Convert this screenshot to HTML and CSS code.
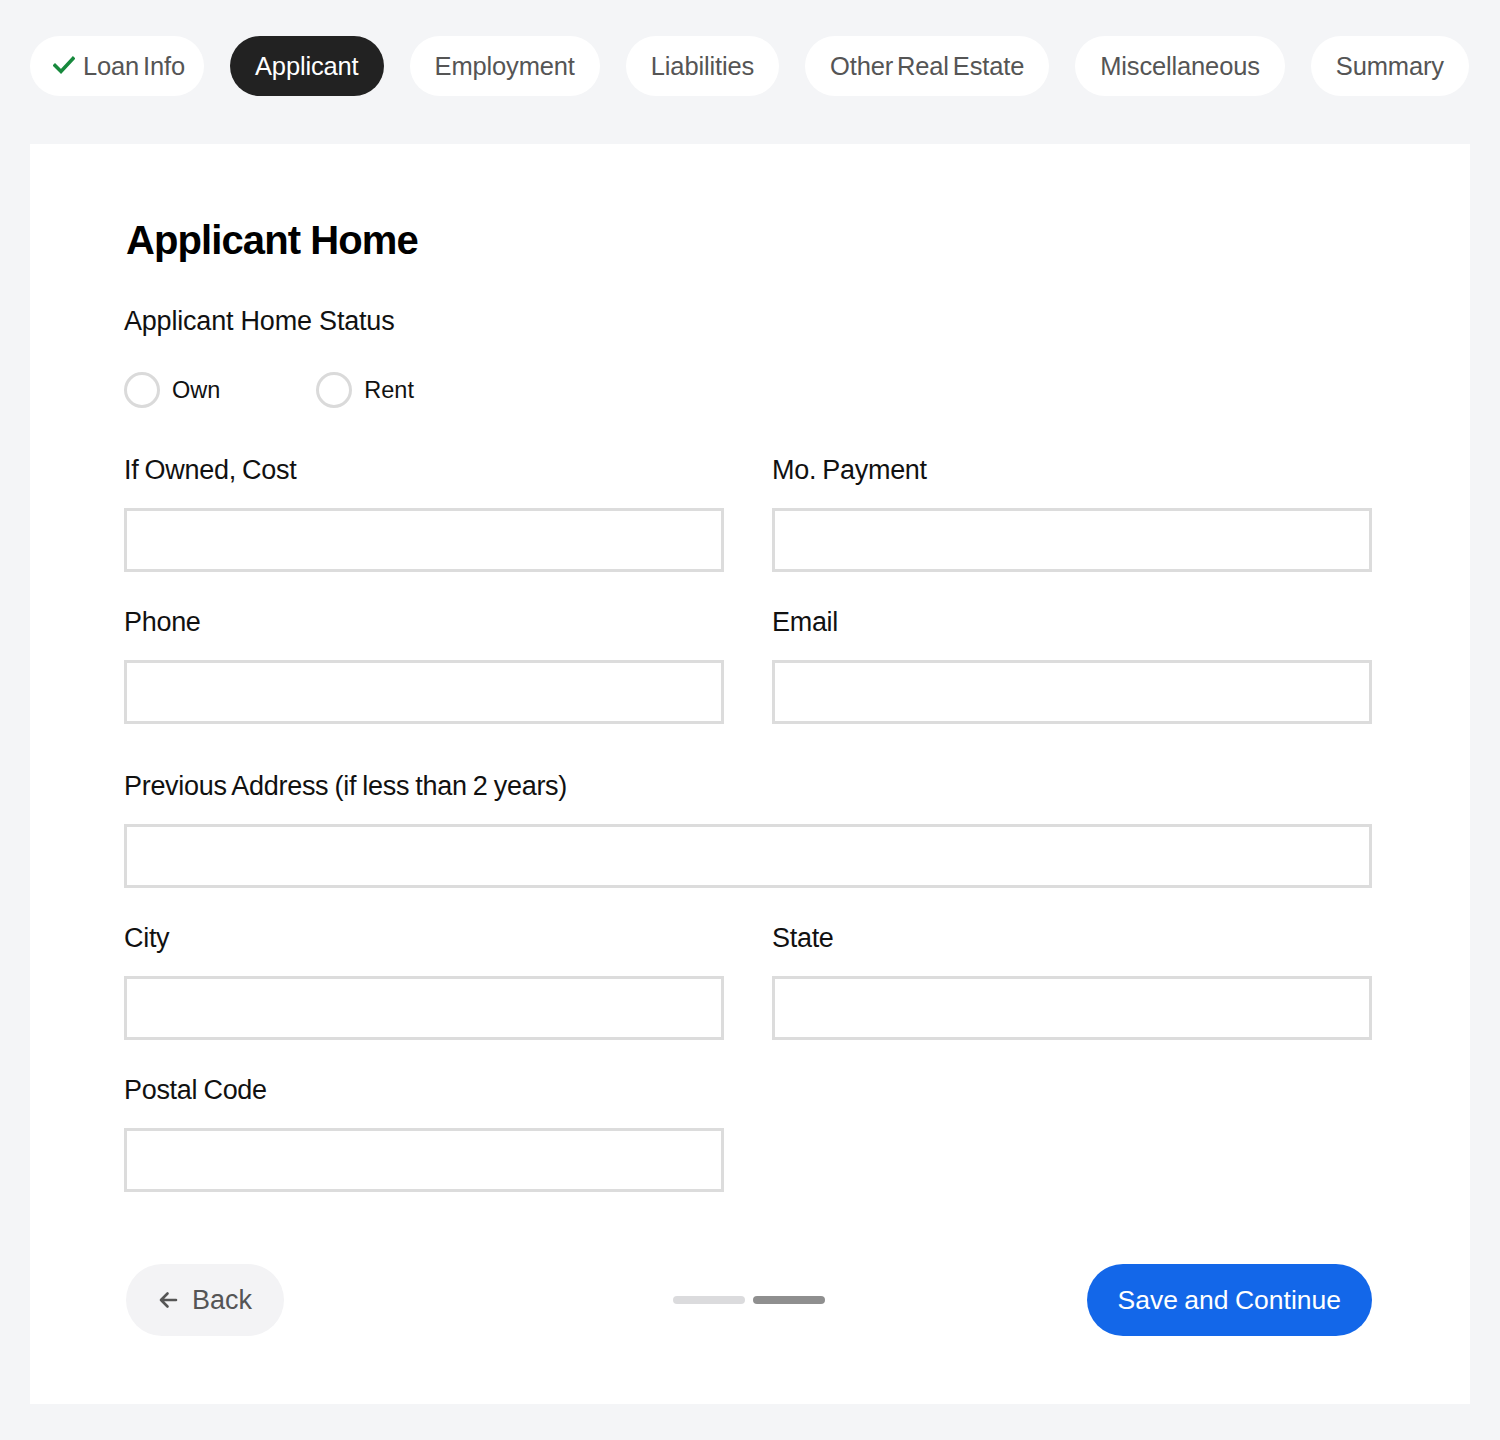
FILE: index.html
```html
<!DOCTYPE html>
<html lang="en">
<head>
<meta charset="utf-8">
<title>Applicant Home</title>
<link rel="stylesheet" href="styles.css">
</head>
<body>
<div class="page">
  <nav class="tabs">
    <a class="tab done"><svg class="check" width="22" height="20" viewBox="0 0 22 20"><path d="M2 10.5 L8 16.5 L20 3.5" fill="none" stroke="#17893d" stroke-width="3.6" stroke-linecap="square"/></svg>Loan Info</a>
    <a class="tab active">Applicant</a>
    <a class="tab">Employment</a>
    <a class="tab">Liabilities</a>
    <a class="tab">Other Real Estate</a>
    <a class="tab">Miscellaneous</a>
    <a class="tab">Summary</a>
  </nav>

  <main class="card">
    <h1 class="title">Applicant Home</h1>

    <div class="status">
      <div class="status-label">Applicant Home Status</div>
      <div class="radios">
        <label class="radio"><span class="circle"></span>Own</label>
        <label class="radio"><span class="circle"></span>Rent</label>
      </div>
    </div>

    <div class="grid">
      <div class="field"><div class="label">If Owned, Cost</div><div class="input"></div></div>
      <div class="field"><div class="label">Mo. Payment</div><div class="input"></div></div>
      <div class="field"><div class="label">Phone</div><div class="input"></div></div>
      <div class="field"><div class="label">Email</div><div class="input"></div></div>
    </div>

    <div class="field full"><div class="label">Previous Address (if less than 2 years)</div><div class="input"></div></div>

    <div class="grid after">
      <div class="field"><div class="label">City</div><div class="input"></div></div>
      <div class="field"><div class="label">State</div><div class="input"></div></div>
      <div class="field"><div class="label">Postal Code</div><div class="input"></div></div>
    </div>

    <div class="footer">
      <div class="left">
        <button class="back"><svg width="20" height="18" viewBox="0 0 20 18"><path d="M18 9 H3 M9.5 2.5 L3 9 L9.5 15.5" fill="none" stroke="#555" stroke-width="2.6" stroke-linecap="round" stroke-linejoin="round"/></svg>Back</button>
      </div>
      <div class="progress"><span class="bar"></span><span class="bar on"></span></div>
      <div class="right">
        <button class="save">Save and Continue</button>
      </div>
    </div>
  </main>
</div>
</body>
</html>
```

FILE: styles.css
```css
* { box-sizing: border-box; }
html, body { margin: 0; padding: 0; }
body {
  background: #f4f5f7;
  font-family: "Liberation Sans", Arial, sans-serif;
  color: #111;
}
.page {
  padding: 36px 30px 36px 30px;
}
.tabs {
  display: flex;
  gap: 26px;
  height: 60px;
}
.tab {
  display: flex;
  align-items: center;
  height: 60px;
  padding: 0 25px;
  border-radius: 30px;
  background: #fff;
  color: #555;
  font-size: 25.5px;
  word-spacing: -3px;
  letter-spacing: -0.15px;
  white-space: nowrap;
}
.tab.done { padding: 0 19px 0 23px; gap: 8px; }
.tab.done .check { margin-top: -2px; }
.tab.active { background: #222; color: #fff; }

.card {
  margin-top: 48px;
  background: #fff;
  padding: 72px 98px 68px 94px;
}
.title {
  margin: 0;
  font-size: 40px;
  line-height: 48px;
  font-weight: 700;
  letter-spacing: -0.9px;
  color: #000;
  padding-left: 2px;
}
.status { margin-top: 41px; }
.status-label {
  font-size: 27px;
  line-height: 32px;
  letter-spacing: -0.2px;
}
.radios {
  display: flex;
  gap: 96px;
  margin-top: 35px;
  height: 36px;
}
.radio {
  display: flex;
  align-items: center;
  gap: 12px;
  font-size: 23.5px;
}
.circle {
  width: 36px;
  height: 36px;
  border-radius: 50%;
  border: 3px solid #dadada;
}
.grid {
  display: grid;
  grid-template-columns: 600px 600px;
  column-gap: 48px;
  row-gap: 34px;
  margin-top: 46px;
}
.grid.after { margin-top: 34px; }
.field.full { margin-top: 46px; }
.label {
  font-size: 27px;
  line-height: 32px;
  letter-spacing: -0.3px;
  word-spacing: -1px;
  height: 32px;
}
.input {
  margin-top: 22px;
  height: 64px;
  border: 3px solid #dcdcdc;
  background: #fff;
}
.footer {
  margin-top: 72px;
  display: grid;
  grid-template-columns: 1fr auto 1fr;
  align-items: center;
}
.left { display: flex; padding-left: 2px; }
.right { display: flex; justify-content: flex-end; }
button {
  font-family: inherit;
  border: 0;
  cursor: pointer;
}
.back {
  display: flex;
  align-items: center;
  gap: 14px;
  height: 72px;
  padding: 0 32px 0 32px;
  border-radius: 36px;
  background: #f3f3f5;
  color: #555;
  font-size: 27px;
}
.progress {
  display: flex;
  gap: 8px;
  padding-left: 2px;
}
.bar {
  width: 72px;
  height: 8px;
  border-radius: 4px;
  background: #dbdbdd;
}
.bar.on { background: #8f8f8f; }
.save {
  height: 72px;
  padding: 0 31px;
  border-radius: 36px;
  background: #1367e9;
  color: #fff;
  font-size: 26.5px;
  word-spacing: -1px;
}
```
